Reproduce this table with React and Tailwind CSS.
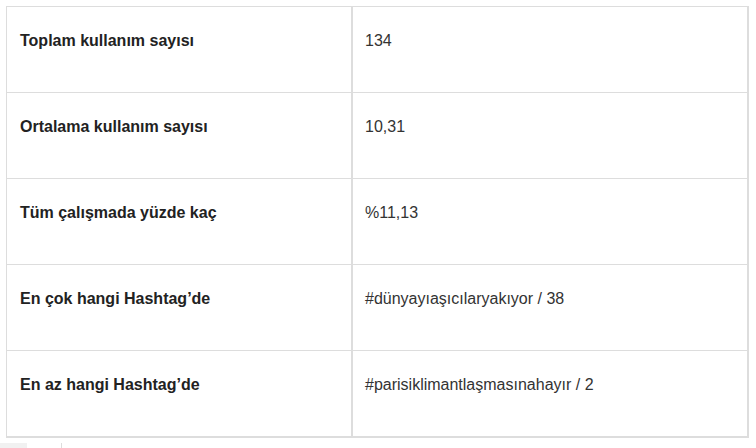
import React from "react";

const rows = [
  ["Toplam kullanım sayısı", "134"],
  ["Ortalama kullanım sayısı", "10,31"],
  ["Tüm çalışmada yüzde kaç", "%11,13"],
  ["En çok hangi Hashtag’de", "#dünyayıaşıcılaryakıyor / 38"],
  ["En az hangi Hashtag’de", "#parisiklimantlaşmasınahayır / 2"],
];

export default function App() {
  return (
    <div className="w-[756px] h-[448px] bg-white overflow-hidden" style={{ fontFamily: '"Liberation Sans", Arial, sans-serif' }}>
      <div className="pt-[6px] pl-[6px]">
        <div className="w-[743px] border-l border-r-2 border-b-2 border-[#dddddd]">
          {rows.map(([a, b], i) => (
            <div key={i} className="flex h-[86px] border-t border-[#dddddd]">
              <div className="w-[344px] pt-[22px] pl-[13px] text-[16px] leading-[24px] font-bold text-[#222222]">{a}</div>
              <div className="flex-1 pt-[22px] pl-[12px] border-l-2 border-[#dddddd] text-[16px] leading-[24px] text-[#333333]">{b}</div>
            </div>
          ))}
        </div>
      </div>
      <div className="flex mt-[5px] h-[8px]">
        <div className="w-[27px] bg-[#f1f1f1]"></div>
        <div className="w-[34px]"></div>
        <div className="w-px bg-[#dddddd]"></div>
      </div>
    </div>
  );
}
